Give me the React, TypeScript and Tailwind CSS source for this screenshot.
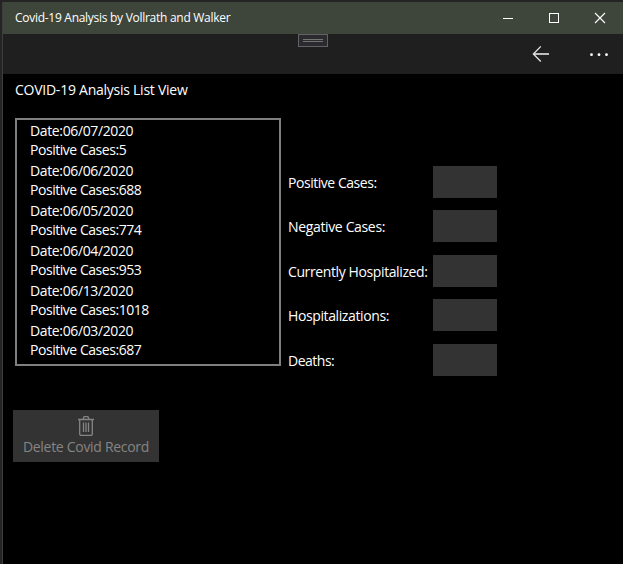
const records = [
  { date: "06/07/2020", cases: 5 },
  { date: "06/06/2020", cases: 688 },
  { date: "06/05/2020", cases: 774 },
  { date: "06/04/2020", cases: 953 },
  { date: "06/13/2020", cases: 1018 },
  { date: "06/03/2020", cases: 687 },
];

const fields = [
  { label: "Positive Cases:", space: "mb-[12px]", track: "tracking-[-0.46px]" },
  { label: "Negative Cases:", space: "mb-[13px]", track: "tracking-[-0.35px]" },
  { label: "Currently Hospitalized:", space: "mb-[12px]", track: "tracking-[-0.39px]" },
  { label: "Hospitalizations:", space: "mb-[13px]", track: "tracking-[-0.39px]" },
  { label: "Deaths:", space: "", track: "tracking-[-0.5px]" },
];

function TitleBar() {
  return (
    <header className="flex h-8 items-center bg-[#3e463b] pl-3 text-white">
      <h1 className="grow whitespace-nowrap text-xs tracking-[-0.28px]">
        Covid-19 Analysis by Vollrath and Walker
      </h1>
      <div className="flex h-8" shapeRendering="crispEdges">
        <svg className="h-8 w-[46px]" viewBox="0 0 46 32" fill="#fff">
          <rect x="18" y="16" width="10" height="1" />
        </svg>
        <svg className="h-8 w-[46px]" viewBox="0 0 46 32" fill="none" stroke="#fff">
          <rect x="18.5" y="11.5" width="9" height="9" />
        </svg>
        <svg className="h-8 w-[46px]" viewBox="0 0 46 32" fill="none" stroke="#fff" strokeWidth="1.1">
          <path d="M18 11l10 10M28 11L18 21" />
        </svg>
      </div>
    </header>
  );
}

function CommandBar() {
  return (
    <div className="flex h-10 bg-[#1f1f1f]">
      <div className="ml-[295px] flex h-[13px] w-[30px] flex-col items-center justify-center gap-px border border-[#626262] bg-[#2b2b2f]">
        <div className="h-px w-5 bg-[#747474]" />
        <div className="h-px w-5 bg-[#747474]" />
      </div>
      <svg className="ml-auto h-10 w-10" viewBox="0 0 40 40" fill="none" stroke="#e4e4e4" strokeWidth="1.3">
        <path d="M12.5 20H28" stroke="#bdbdbd" strokeWidth="2" />
        <path d="M19.8 12.4L12.4 20l7.4 7.5" />
      </svg>
      <svg className="ml-3 h-10 w-[50px]" viewBox="0 0 50 40" fill="#fff">
        <circle cx="18.5" cy="20.7" r="1.4" />
        <circle cx="26" cy="20.7" r="1.4" />
        <circle cx="33.5" cy="20.7" r="1.4" />
      </svg>
    </div>
  );
}

export default function App() {
  return (
    <div className="h-[564px] w-[623px] overflow-hidden border-t-2 border-[#242424] bg-[#242424] pl-0.5 font-['Open_Sans','Noto_Sans',sans-serif]">
      <div className="h-full border-l border-[#3d3d3d] bg-black text-sm text-white">
        <TitleBar />
        <CommandBar />
        <main className="pl-3">
          <h2 className="h-11 pt-1.5 leading-5 tracking-[-0.25px]">COVID-19 Analysis List View</h2>
          <div className="flex items-start">
            <ul className="h-[248px] w-[266px] border-2 border-[#7f7f7f] pl-[13px] pt-px">
              {records.map((r) => (
                <li key={r.date} className="h-10 leading-[19px]">
                  <p className="tracking-[-0.37px]">Date:{r.date}</p>
                  <p className="tracking-[-0.46px]">Positive Cases:{r.cases}</p>
                </li>
              ))}
            </ul>
            <div className="ml-[7px] mt-12">
              {fields.map((f) => (
                <label key={f.label} className={`flex h-8 items-center ${f.space}`}>
                  <span className={`w-[145px] whitespace-nowrap pt-0.5 ${f.track}`}>{f.label}</span>
                  <input readOnly className="h-8 w-16 bg-[#333] outline-none" />
                </label>
              ))}
            </div>
          </div>
          <button
            disabled
            className="-ml-0.5 mt-[34px] flex h-[52px] w-[146px] flex-col items-center bg-[#333] pt-1.5 text-[#858585]"
          >
            <svg className="mb-px mr-px h-5 w-[18px]" viewBox="0 0 18 20" fill="none" stroke="currentColor" strokeWidth="1.3">
              <path d="M1 3.5h16M6.5 3.5V1.7q0-1 1-1h3q1 0 1 1v1.8" />
              <path d="M2.7 3.5V18q0 1.4 1.4 1.4h9.8q1.4 0 1.4-1.4V3.5M6.5 6.5v9.5M9 6.5v9.5M11.5 6.5v9.5" />
            </svg>
            <span className="whitespace-nowrap leading-5 tracking-[-0.3px]">Delete Covid Record</span>
          </button>
        </main>
      </div>
    </div>
  );
}
